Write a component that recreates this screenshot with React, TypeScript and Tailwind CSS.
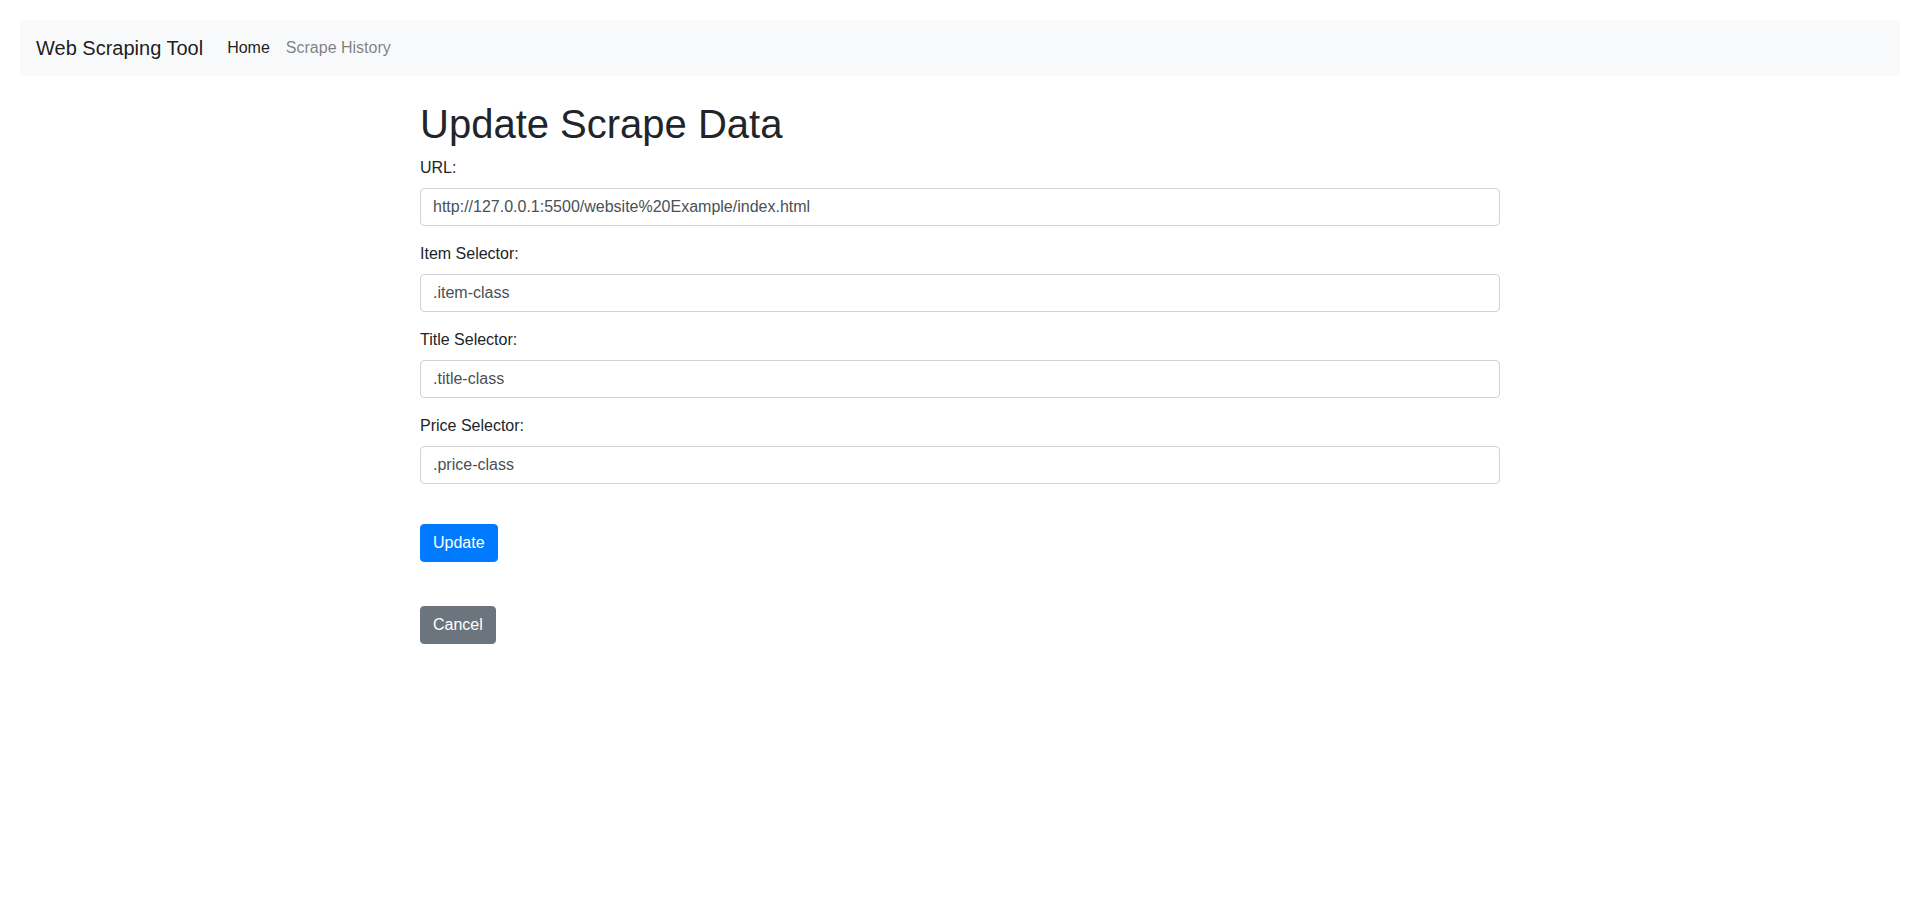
export default function App() {
  const fields = [
    { label: "URL:", value: "http://127.0.0.1:5500/website%20Example/index.html" },
    { label: "Item Selector:", value: ".item-class" },
    { label: "Title Selector:", value: ".title-class" },
    { label: "Price Selector:", value: ".price-class" },
  ];

  return (
    <div className="min-h-screen bg-white p-5 text-[#212529] font-['Liberation_Sans',Arial,sans-serif] text-base leading-6">
      <nav className="flex h-14 items-center bg-[#f8f9fa] px-4">
        <a className="mr-4 text-xl leading-[30px] text-black/90">Web Scraping Tool</a>
        <a className="px-2 text-black/90">Home</a>
        <a className="px-2 text-black/50">Scrape History</a>
      </nav>

      <div className="mx-auto w-[1080px] pt-6">
        <h1 className="mb-2 text-[40px] leading-[48px] font-normal">Update Scrape Data</h1>
        <form>
          {fields.map((f) => (
            <div key={f.label} className="mb-4">
              <label className="mb-2 block">{f.label}</label>
              <input
                className="block h-[38px] w-full rounded border border-[#ced4da] px-3 py-1.5 text-[#495057] outline-none"
                defaultValue={f.value}
              />
            </div>
          ))}
          <button
            type="button"
            className="mt-10 block h-[38px] rounded border border-[#007bff] bg-[#007bff] px-3 text-white"
          >
            Update
          </button>
        </form>
        <button
          type="button"
          className="mt-11 block h-[38px] rounded border border-[#6c757d] bg-[#6c757d] px-3 text-white"
        >
          Cancel
        </button>
      </div>
    </div>
  );
}
